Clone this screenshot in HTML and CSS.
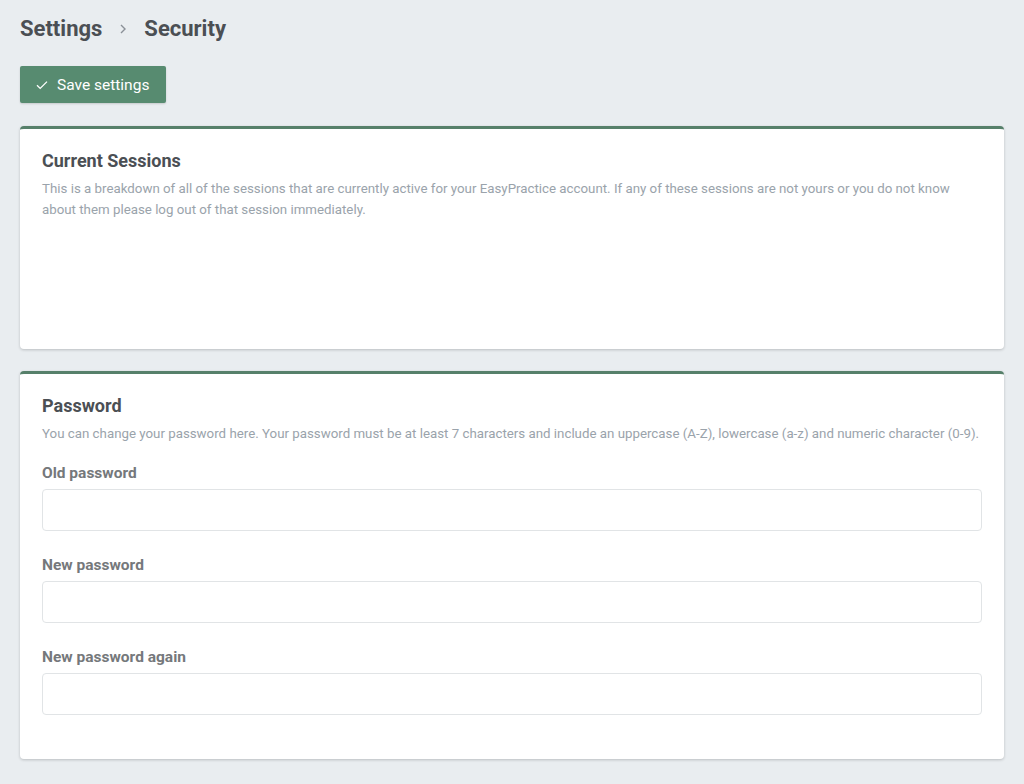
FILE: index.html
```html
<!DOCTYPE html>
<html lang="en">
<head>
    <meta charset="UTF-8">
    <meta name="viewport" content="width=device-width, initial-scale=1.0">
    <title>Settings - Security</title>
    <link rel="stylesheet" href="styles.css">
</head>
<body>

    <div class="page">
        <h1 class="breadcrumb">
            <span>Settings</span>
            <svg class="crumb-sep" width="10" height="12" viewBox="0 0 10 12"><path d="M3 2 L7 6 L3 10" fill="none" stroke="#8a9097" stroke-width="1.4"/></svg>
            <span>Security</span>
        </h1>

        <button class="save-button">
            <svg width="12" height="10" viewBox="0 0 12 10"><path d="M1 5.2 L4.2 8.4 L11 1.6" fill="none" stroke="#fff" stroke-width="1.3"/></svg>
            Save settings
        </button>

        <div class="card sessions">
            <h2>Current Sessions</h2>
            <p>This is a breakdown of all of the sessions that are currently active for your EasyPractice account. If any of these sessions are not yours or you do not know about them please log out of that session immediately.</p>
        </div>

        <div class="card">
            <h2>Password</h2>
            <p>You can change your password here. Your password must be at least 7 characters and include an uppercase (A-Z), lowercase (a-z) and numeric character (0-9).</p>

            <div class="field">
                <label for="old-password">Old password</label>
                <input type="password" id="old-password">
            </div>
            <div class="field">
                <label for="new-password">New password</label>
                <input type="password" id="new-password">
            </div>
            <div class="field">
                <label for="new-password-again">New password again</label>
                <input type="password" id="new-password-again">
            </div>
        </div>
    </div>

</body>
</html>
```

FILE: styles.css
```css
body {
    font-family: Roboto, "Liberation Sans", sans-serif;
    background-color: #e9edf0;
    color: #4b4f54;
    margin: 0;
}
.page {
    padding: 14px 20px 24px 20px;
}
.breadcrumb {
    display: flex;
    align-items: center;
    gap: 16px;
    font-size: 22px;
    font-weight: 700;
    color: #4b4f54;
    margin: 0 0 24px 0;
    height: 28px;
}
.crumb-sep {
    margin-top: 2px;
}
.save-button {
    display: flex;
    align-items: center;
    gap: 9px;
    height: 37px;
    width: 146px;
    padding: 0 0 0 16px;
    background-color: #578b70;
    color: #fff;
    border: none;
    border-radius: 2px;
    font-family: inherit;
    font-size: 15.5px;
    box-shadow: 0 1px 2px rgba(0, 0, 0, 0.15);
    margin-bottom: 23px;
    cursor: pointer;
}
.card {
    background-color: #fff;
    border-top: 3px solid #56806a;
    border-radius: 4px;
    box-shadow: 0 1px 3px rgba(0, 0, 0, 0.2);
    padding: 21px 22px 22px 22px;
    margin-bottom: 22px;
}
.card.sessions {
    box-sizing: border-box;
    height: 223px;
}
.card h2 {
    font-size: 18px;
    font-weight: 700;
    color: #4b4f54;
    margin: 0 0 7px 0;
}
.card p {
    font-size: 13.3px;
    line-height: 21px;
    color: #9aa3ab;
    margin: 0;
}
.field {
    margin-top: 20px;
}
.field + .field {
    margin-top: 25px;
}
.field label {
    display: block;
    font-size: 15.5px;
    font-weight: 700;
    color: #75787b;
    margin-bottom: 7px;
}
.field input {
    display: block;
    width: 100%;
    box-sizing: border-box;
    height: 42px;
    border: 1px solid #e1e4e6;
    border-radius: 4px;
    background-color: #fff;
    padding: 0 12px;
    font-size: 14px;
}
.card:last-child {
    padding-bottom: 44px;
    margin-bottom: 0;
}
```
